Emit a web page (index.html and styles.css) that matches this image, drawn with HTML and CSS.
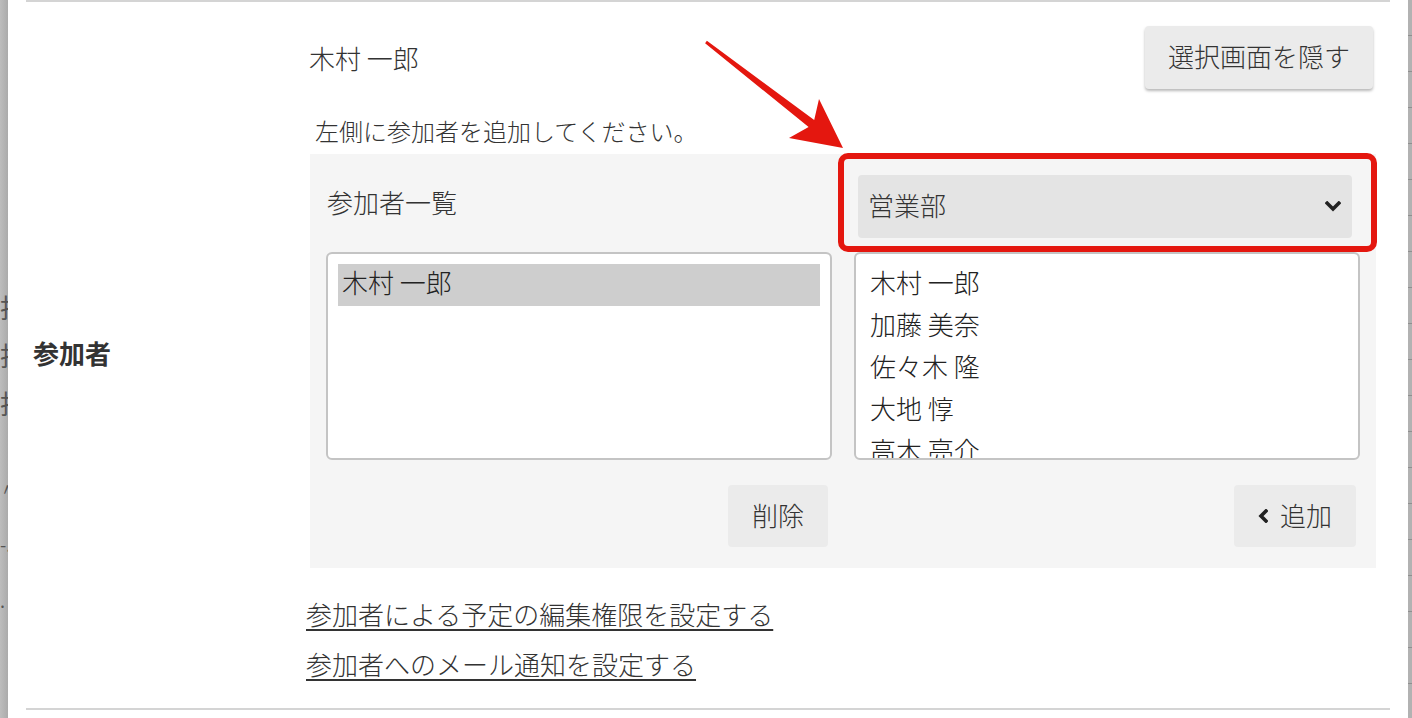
FILE: index.html
```html
<!DOCTYPE html>
<html lang="ja">
<head>
<meta charset="utf-8">
<title>参加者</title>
<link rel="stylesheet" href="styles.css">
</head>
<body>
<div class="screen">
  <div class="backdrop-left">
    <div class="ghost-line">担</div>
    <div class="ghost-line">担</div>
    <div class="ghost-line">担</div>
    <div class="ghost-gap"></div>
    <div class="ghost-line small">〃</div>
    <div class="ghost-line small">-.</div>
    <div class="ghost-line small">.</div>
  </div>
  <div class="modal">
    <div class="row">
      <div class="row-label">参加者</div>
      <div class="row-body">
        <div class="top-line">
          <span class="current">木村 一郎</span>
          <button class="btn btn-raised">選択画面を隠す</button>
        </div>
        <p class="hint">左側に参加者を追加してください。</p>
        <div class="picker">
          <div class="col">
            <div class="col-head"><span class="col-title">参加者一覧</span></div>
            <div class="listbox">
              <div class="opt selected">木村 一郎</div>
            </div>
            <div class="col-actions"><button class="btn">削除</button></div>
          </div>
          <div class="col">
            <div class="col-head">
              <div class="select">
                <span>営業部</span>
                <svg class="chev-down" width="16" height="11" viewBox="0 0 16 11"><path d="M2.2 2.2 L8 8 L13.8 2.2" fill="none" stroke="#222" stroke-width="3.6" stroke-linecap="square"/></svg>
              </div>
            </div>
            <div class="listbox">
              <div class="opt">木村 一郎</div>
              <div class="opt">加藤 美奈</div>
              <div class="opt">佐々木 隆</div>
              <div class="opt">大地 惇</div>
              <div class="opt">高木 亮介</div>
              <div class="opt">山田 花子</div>
            </div>
            <div class="col-actions">
              <button class="btn btn-icon">
                <svg class="chev-left" width="10" height="14" viewBox="0 0 10 14"><path d="M8 2 L3 7 L8 12" fill="none" stroke="#222" stroke-width="3.6" stroke-linecap="square"/></svg>
                <span>追加</span>
              </button>
            </div>
          </div>
          <div class="highlight"></div>
        </div>
        <div class="links">
          <a class="link" href="#">参加者による予定の編集権限を設定する</a>
          <a class="link" href="#">参加者へのメール通知を設定する</a>
        </div>
      </div>
    </div>
  </div>
  <div class="backdrop-right"></div>
  <svg class="arrow" width="1412" height="718" viewBox="0 0 1412 718">
    <polygon points="706.9,40.8 814.2,119.9 819,99 843,148 789,138 808.6,127.1 705.1,43.2" fill="#e4170f"/>
  </svg>
</div>
</body>
</html>
```

FILE: styles.css
```css
* { box-sizing: border-box; }
html, body { margin: 0; padding: 0; }
body {
  width: 1412px;
  height: 718px;
  overflow: hidden;
  background: #fff;
  color: #333;
  font-family: "Noto Sans CJK JP", "Noto Sans", sans-serif;
  font-weight: 300;
}
.screen {
  position: relative;
  display: flex;
  height: 718px;
}
.backdrop-left {
  width: 8px;
  flex: none;
  overflow: hidden;
  background: linear-gradient(to right, #bdbdbd, #ababab);
  display: flex;
  flex-direction: column;
  align-items: flex-start;
  padding-top: 283px;
}
.ghost-line {
  font-size: 26px;
  line-height: 48px;
  color: #555;
  font-weight: 400;
  white-space: nowrap;
}
.ghost-gap { height: 33px; flex: none; }
.ghost-line.small { font-size: 18px; line-height: 56px; }
.modal {
  flex: none;
  width: 1400px;
  background: #fff;
  padding: 0 18px;
}
.backdrop-right {
  flex: none;
  width: 4px;
  background: repeating-linear-gradient(to bottom, #b2b2b2 0 35px, #8f8f8f 35px 36px);
}
.row {
  display: flex;
  align-items: center;
  border-top: 2px solid #d4d4d4;
  border-bottom: 2px solid #d4d4d4;
  padding-right: 14px;
}
.row-label {
  width: 280px;
  flex: none;
  padding-left: 7px;
  padding-bottom: 4px;
  font-size: 26px;
  font-weight: 700;
  line-height: 30px;
  color: #333;
}
.row-body {
  flex: 1;
  padding-top: 24px;
  padding-bottom: 19px;
}
.top-line {
  display: flex;
  align-items: center;
  justify-content: space-between;
  height: 63px;
}
.current {
  font-size: 26px;
  line-height: 30px;
  padding-left: 3px;
}
.btn {
  font-family: inherit;
  font-weight: inherit;
  font-size: 26px;
  line-height: 30px;
  color: #333;
  background: #ebebeb;
  border: none;
  border-radius: 4px;
  padding: 0 24px 3px;
  height: 62px;
  display: inline-flex;
  align-items: center;
  gap: 12px;
}
.btn-raised {
  height: 63px;
  padding: 0 23px 4px;
  margin-right: 3px;
  box-shadow: 0 2px 3px rgba(0, 0, 0, 0.28);
}
.chev-left { margin-top: 3px; }
.hint {
  margin: 30px 0 0 9px;
  font-size: 24px;
  line-height: 24px;
}
.picker {
  position: relative;
  margin: 11px 0 0 4px;
  background: #f5f5f5;
  padding: 21px 16px;
  display: flex;
  gap: 22px;
}
.col {
  width: 506px;
  display: flex;
  flex-direction: column;
}
.col-head {
  height: 63px;
  display: flex;
  align-items: center;
}
.col-title {
  font-size: 26px;
  line-height: 30px;
  padding-left: 1px;
  margin-top: -10px;
}
.select {
  flex: 1;
  height: 63px;
  margin: 0 8px 0 4px;
  background: #e4e4e4;
  border-radius: 4px;
  display: flex;
  align-items: center;
  justify-content: space-between;
  padding: 0 11px 4px 10px;
  font-size: 26px;
  line-height: 30px;
}
.chev-down { margin-top: 3px; }
.listbox {
  margin-top: 14px;
  height: 208px;
  background: #fff;
  border: 2px solid #c4c4c4;
  border-radius: 6px;
  padding: 10px;
  overflow: hidden;
}
.opt {
  font-size: 26px;
  line-height: 35px;
  height: 42px;
  padding-left: 4px;
  color: #222;
  white-space: nowrap;
}
.opt.selected { background: #cecece; }
.col-actions {
  margin-top: 25px;
  display: flex;
  justify-content: flex-end;
  padding-right: 4px;
}
.highlight {
  position: absolute;
  left: 528px;
  top: -1px;
  width: 539px;
  height: 99px;
  border: 6px solid #e4170f;
  border-radius: 10px;
  pointer-events: none;
}
.links {
  padding-top: 21px;
  display: flex;
  flex-direction: column;
  align-items: flex-start;
}
.link {
  font-size: 26px;
  line-height: 50px;
  color: #333;
  text-decoration: underline;
  text-decoration-thickness: 2px;
  text-underline-offset: 4px;
}
.arrow {
  position: absolute;
  left: 0;
  top: 0;
  pointer-events: none;
}
```
